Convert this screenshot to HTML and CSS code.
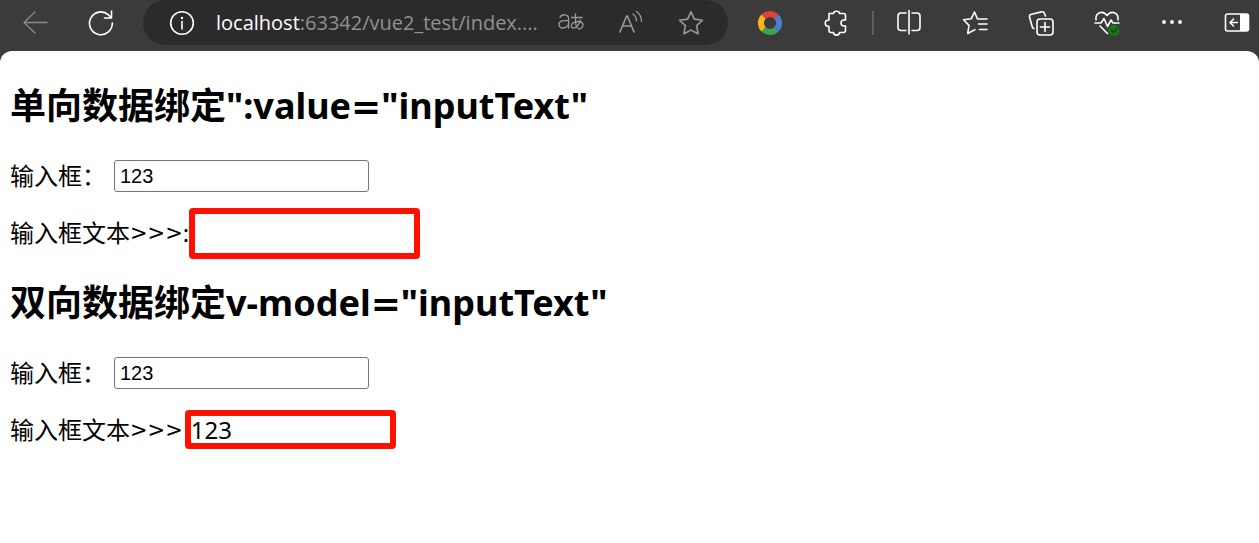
FILE: index.html
```html
<!DOCTYPE html>
<html lang="zh-CN">
<head>
    <meta charset="UTF-8">
    <meta name="viewport" content="width=device-width, initial-scale=1.0">
    <title>vue2_test</title>
    <link rel="stylesheet" href="styles.css">
</head>
<body>
    <header class="toolbar">
        <button class="tool dim" type="button" aria-label="Back">
            <svg width="26" height="26" viewBox="0 0 26 26"><path d="M25 12.5H2M13 2L2 12.5L13 23"/></svg>
        </button>
        <button class="tool" type="button" aria-label="Refresh">
            <svg width="26" height="26" viewBox="0 0 26 26"><path class="bold" d="M24.3 13A11.4 11.4 0 1 1 20.5 4.8L23 7.5M23.5 1V8H16.5"/></svg>
        </button>

        <div class="address">
            <button class="site-info" type="button" aria-label="Site information">
                <svg width="26" height="26" viewBox="0 0 26 26"><circle class="bold" cx="13" cy="13" r="11.3"/><path class="bold" d="M13 11.5V19"/><circle class="fill" cx="13" cy="8" r="1.2"/></svg>
            </button>
            <div class="url"><span class="host">localhost</span>:63342/vue2_test/index....</div>
            <button class="address-tool" type="button" aria-label="Translate">
                <svg width="28" height="26" viewBox="0 0 28 26">
                    <path d="M3 7.5C4 5.2 6 4.6 8 4.8C10.5 5 11.6 6.5 11.6 8.8V18M11.6 10.3C7 10.3 2 10.4 2 14.2C2 16.8 4 18 6 18C8.5 18 11.6 16.3 11.6 13"/>
                    <path d="M14.5 7.5H25M18.5 4V11C18.5 14 19.2 16.5 20.2 18M23.5 9.8C22.5 14 19.5 18 16.5 18C12.5 18 14 11.5 21 11.5C27.5 11.5 27.5 18 21.5 19"/>
                </svg>
            </button>
            <button class="address-tool" type="button" aria-label="Read aloud">
                <svg width="26" height="26" viewBox="0 0 26 26"><path class="bold" d="M2 22L8.6 6H9.4L16 22M4.6 16H13.4"/><path d="M15 4C17.5 5.8 18.5 8 18.5 11M18.5 1.5C22 4 23.5 7.5 23.5 11.5"/></svg>
            </button>
            <button class="address-tool" type="button" aria-label="Add to favorites">
                <svg width="26" height="26" viewBox="0 0 26 26"><path class="bold" d="M13 1.8L16.4 9.1L24.5 10.2L18.6 15.7L20.1 23.8L13 20.1L5.9 23.8L7.4 15.7L1.5 10.2L9.6 9.1Z"/></svg>
            </button>
        </div>

        <button class="tool" type="button" aria-label="Google extension">
            <svg class="ring" width="26" height="26" viewBox="0 0 26 26">
                <path stroke="#db4437" d="M6.6 6.6A9 9 0 0 1 19.4 6.6"/>
                <path stroke="#4a7fc9" d="M19.4 6.6A9 9 0 0 1 19.4 19.4"/>
                <path stroke="#3da256" d="M19.4 19.4A9 9 0 0 1 6.6 19.4"/>
                <path stroke="#f4b61a" d="M6.6 19.4A9 9 0 0 1 6.6 6.6"/>
            </svg>
        </button>
        <button class="tool" type="button" aria-label="Extensions">
            <svg width="26" height="26" viewBox="0 0 26 26"><path class="bold" d="M6 3.5H10.5C10.5 0.5 16.5 0.5 16.5 3.5H20.5Q22.5 3.5 22.5 5.5V10H21C17 10 17 16 21 16H22.5V20.5Q22.5 22.5 20.5 22.5H16.5C16.5 26 10.5 26 10.5 22.5H8Q6 22.5 6 20.5V16.5C1 16.5 1 10 6 10Z"/></svg>
        </button>
        <span class="divider"></span>
        <button class="tool" type="button" aria-label="Split screen">
            <svg width="26" height="26" viewBox="0 0 26 26"><path class="bold" d="M10 3H5Q2 3 2 6V17.5Q2 20.5 5 20.5H10M16 3H21Q24 3 24 6V17.5Q24 20.5 21 20.5H16M13 0V24"/></svg>
        </button>
        <button class="tool" type="button" aria-label="Favorites">
            <svg width="26" height="26" viewBox="0 0 26 26"><path class="bold" d="M17.5 9H15.5L12.5 2L9.3 8.7L1.5 9.8L7 15.4L5.7 23.5L13 19.6M17 9H25M16.5 14H25M17.5 19.5H25"/></svg>
        </button>
        <button class="tool" type="button" aria-label="Collections">
            <svg width="26" height="26" viewBox="0 0 26 26"><path class="bold" d="M17.5 6L16.5 3.5Q15.8 1.3 13.5 1.9L3.5 4.2Q1 4.8 1.5 7L4 16Q4.5 18.5 6 18.5"/><rect class="bold" x="9" y="9" width="16" height="16" rx="3"/><path class="bold" d="M17 12.5V21.5M12.5 17H21.5"/></svg>
        </button>
        <button class="tool" type="button" aria-label="Browser essentials">
            <svg width="26" height="26" viewBox="0 0 26 26"><path class="bold" d="M2 10C1 2 9 0 13 5.5C17 0 25 2 24 10M1 13H7L10 8.5L13.5 16.5L17 10L19 13H25M6 16L13.5 23.5"/><circle class="badge" cx="20" cy="20.5" r="5.5"/><path class="tick" d="M17.5 20.5L19.5 22.5L23 18.8"/></svg>
        </button>
        <button class="tool" type="button" aria-label="Settings and more">
            <svg width="26" height="26" viewBox="0 0 26 26"><circle class="fill" cx="4" cy="12" r="1.9"/><circle class="fill" cx="12" cy="12" r="1.9"/><circle class="fill" cx="20" cy="12" r="1.9"/></svg>
        </button>
        <button class="tool sidebar" type="button" aria-label="Sidebar">
            <svg width="26" height="26" viewBox="0 0 26 26"><rect class="bold" x="1.5" y="4" width="23" height="17" rx="2"/><path class="fill" d="M16 4H24V21H16Z"/><path class="bold" d="M13.5 12.5H6M9.5 9L6 12.5L9.5 16"/></svg>
        </button>
    </header>

    <main class="page">
        <h2>单向数据绑定":value<span class="equals">=</span>"inputText"</h2>
        <div class="row">
            <label for="oneWay">输入框&#65306;</label>
            <input type="text" id="oneWay" value="123">
        </div>
        <div class="row">输入框文本<span class="arrows">&gt;&gt;&gt;</span>:<span class="result"><span class="mark mark-empty"></span></span></div>

        <h2>双向数据绑定v-model<span class="equals">=</span>"inputText"</h2>
        <div class="row">
            <label for="twoWay">输入框&#65306;</label>
            <input type="text" id="twoWay" value="123">
        </div>
        <div class="row">输入框文本<span class="arrows">&gt;&gt;&gt;</span><span class="result"><span class="mark"></span><output for="twoWay" id="twoWayText">123</output></span></div>
    </main>

    <script>
        document.getElementById("twoWay").addEventListener("input", function() {
            document.getElementById("twoWayText").textContent = this.value;
        });
    </script>
</body>
</html>
```
FILE: styles.css
```css
* {
    box-sizing: border-box;
}

body {
    margin: 0;
    min-height: 100vh;
    background-color: #3b3b3b;
    font-family: "Noto Sans", "Noto Sans CJK SC", sans-serif;
    font-size: 24px;
    color: #000;
    display: flex;
    flex-direction: column;
}

/* browser bar */
.toolbar {
    display: flex;
    align-items: center;
    height: 45px;
    margin-bottom: 6px;
}

button {
    display: flex;
    align-items: center;
    justify-content: center;
    flex-shrink: 0;
    height: 45px;
    padding: 0;
    border: none;
    background: none;
    color: #fff;
    cursor: pointer;
}

svg {
    fill: none;
    stroke: currentColor;
    stroke-width: 1.3;
    stroke-linecap: round;
    stroke-linejoin: round;
}

.bold {
    stroke-width: 1.6;
}

.fill {
    fill: currentColor;
    stroke: none;
}

.tool {
    width: 66px;
}

.tool:first-child {
    margin-left: 2px;
}

.dim {
    color: #8a8a8a;
}

.sidebar {
    width: 53px;
    padding-left: 8px;
}

.ring {
    stroke-width: 6;
    stroke-linecap: butt;
}

.badge {
    fill: #107c10;
    stroke: none;
}

.tick {
    stroke: #2b2b2b;
}

.divider {
    width: 2px;
    height: 24px;
    margin: 0 2px 0 3px;
    background-color: #5e5e5e;
}

.address {
    flex: 1;
    min-width: 0;
    display: flex;
    align-items: center;
    height: 45px;
    margin: 0 9px;
    padding: 0 7px 0 9px;
    border-radius: 23px;
    background-color: #2b2b2b;
}

.site-info {
    width: 60px;
}

.address-tool {
    width: 60px;
    color: #9a9a9a;
}

.url {
    flex: 1;
    min-width: 0;
    padding-left: 4px;
    font-family: "Open Sans", "Noto Sans", sans-serif;
    font-size: 20px;
    line-height: 45px;
    white-space: nowrap;
    color: #919191;
}

.host {
    color: #fff;
}

/* page content */
.page {
    flex: 1;
    padding: 31px 10px;
    border-radius: 12px 12px 0 0;
    background-color: #fff;
}

h2 {
    margin: 0 0 30px;
    font-size: 36px;
    line-height: 48px;
}

.equals {
    font-family: "DejaVu Sans", sans-serif;
    font-size: 36px;
    line-height: 1;
}

.row {
    display: flex;
    align-items: center;
    height: 32px;
    margin-bottom: 25px;
    line-height: 32px;
    white-space: nowrap;
}

.row + h2 {
    margin-top: 30px;
}

.row:has(+ h2) {
    margin-bottom: 0;
}

label {
    width: 104px;
}

input {
    width: 255px;
    height: 32px;
    padding: 0 5px;
    border: 1px solid #767676;
    border-radius: 3px;
    background-color: #fff;
    font-family: "Liberation Sans", Arial, sans-serif;
    font-size: 20px;
    color: #000;
}

.arrows {
    font-family: "DejaVu Sans", sans-serif;
    font-size: 21px;
}

.result {
    position: relative;
    height: 32px;
    padding-left: 8px;
}

.mark {
    position: absolute;
    top: -4px;
    left: 2px;
    width: 211px;
    height: 39px;
    border: 6px solid #ff1000;
    border-radius: 4px;
}

.mark-empty {
    top: -9px;
    left: 0;
    width: 231px;
    height: 51px;
}
```
